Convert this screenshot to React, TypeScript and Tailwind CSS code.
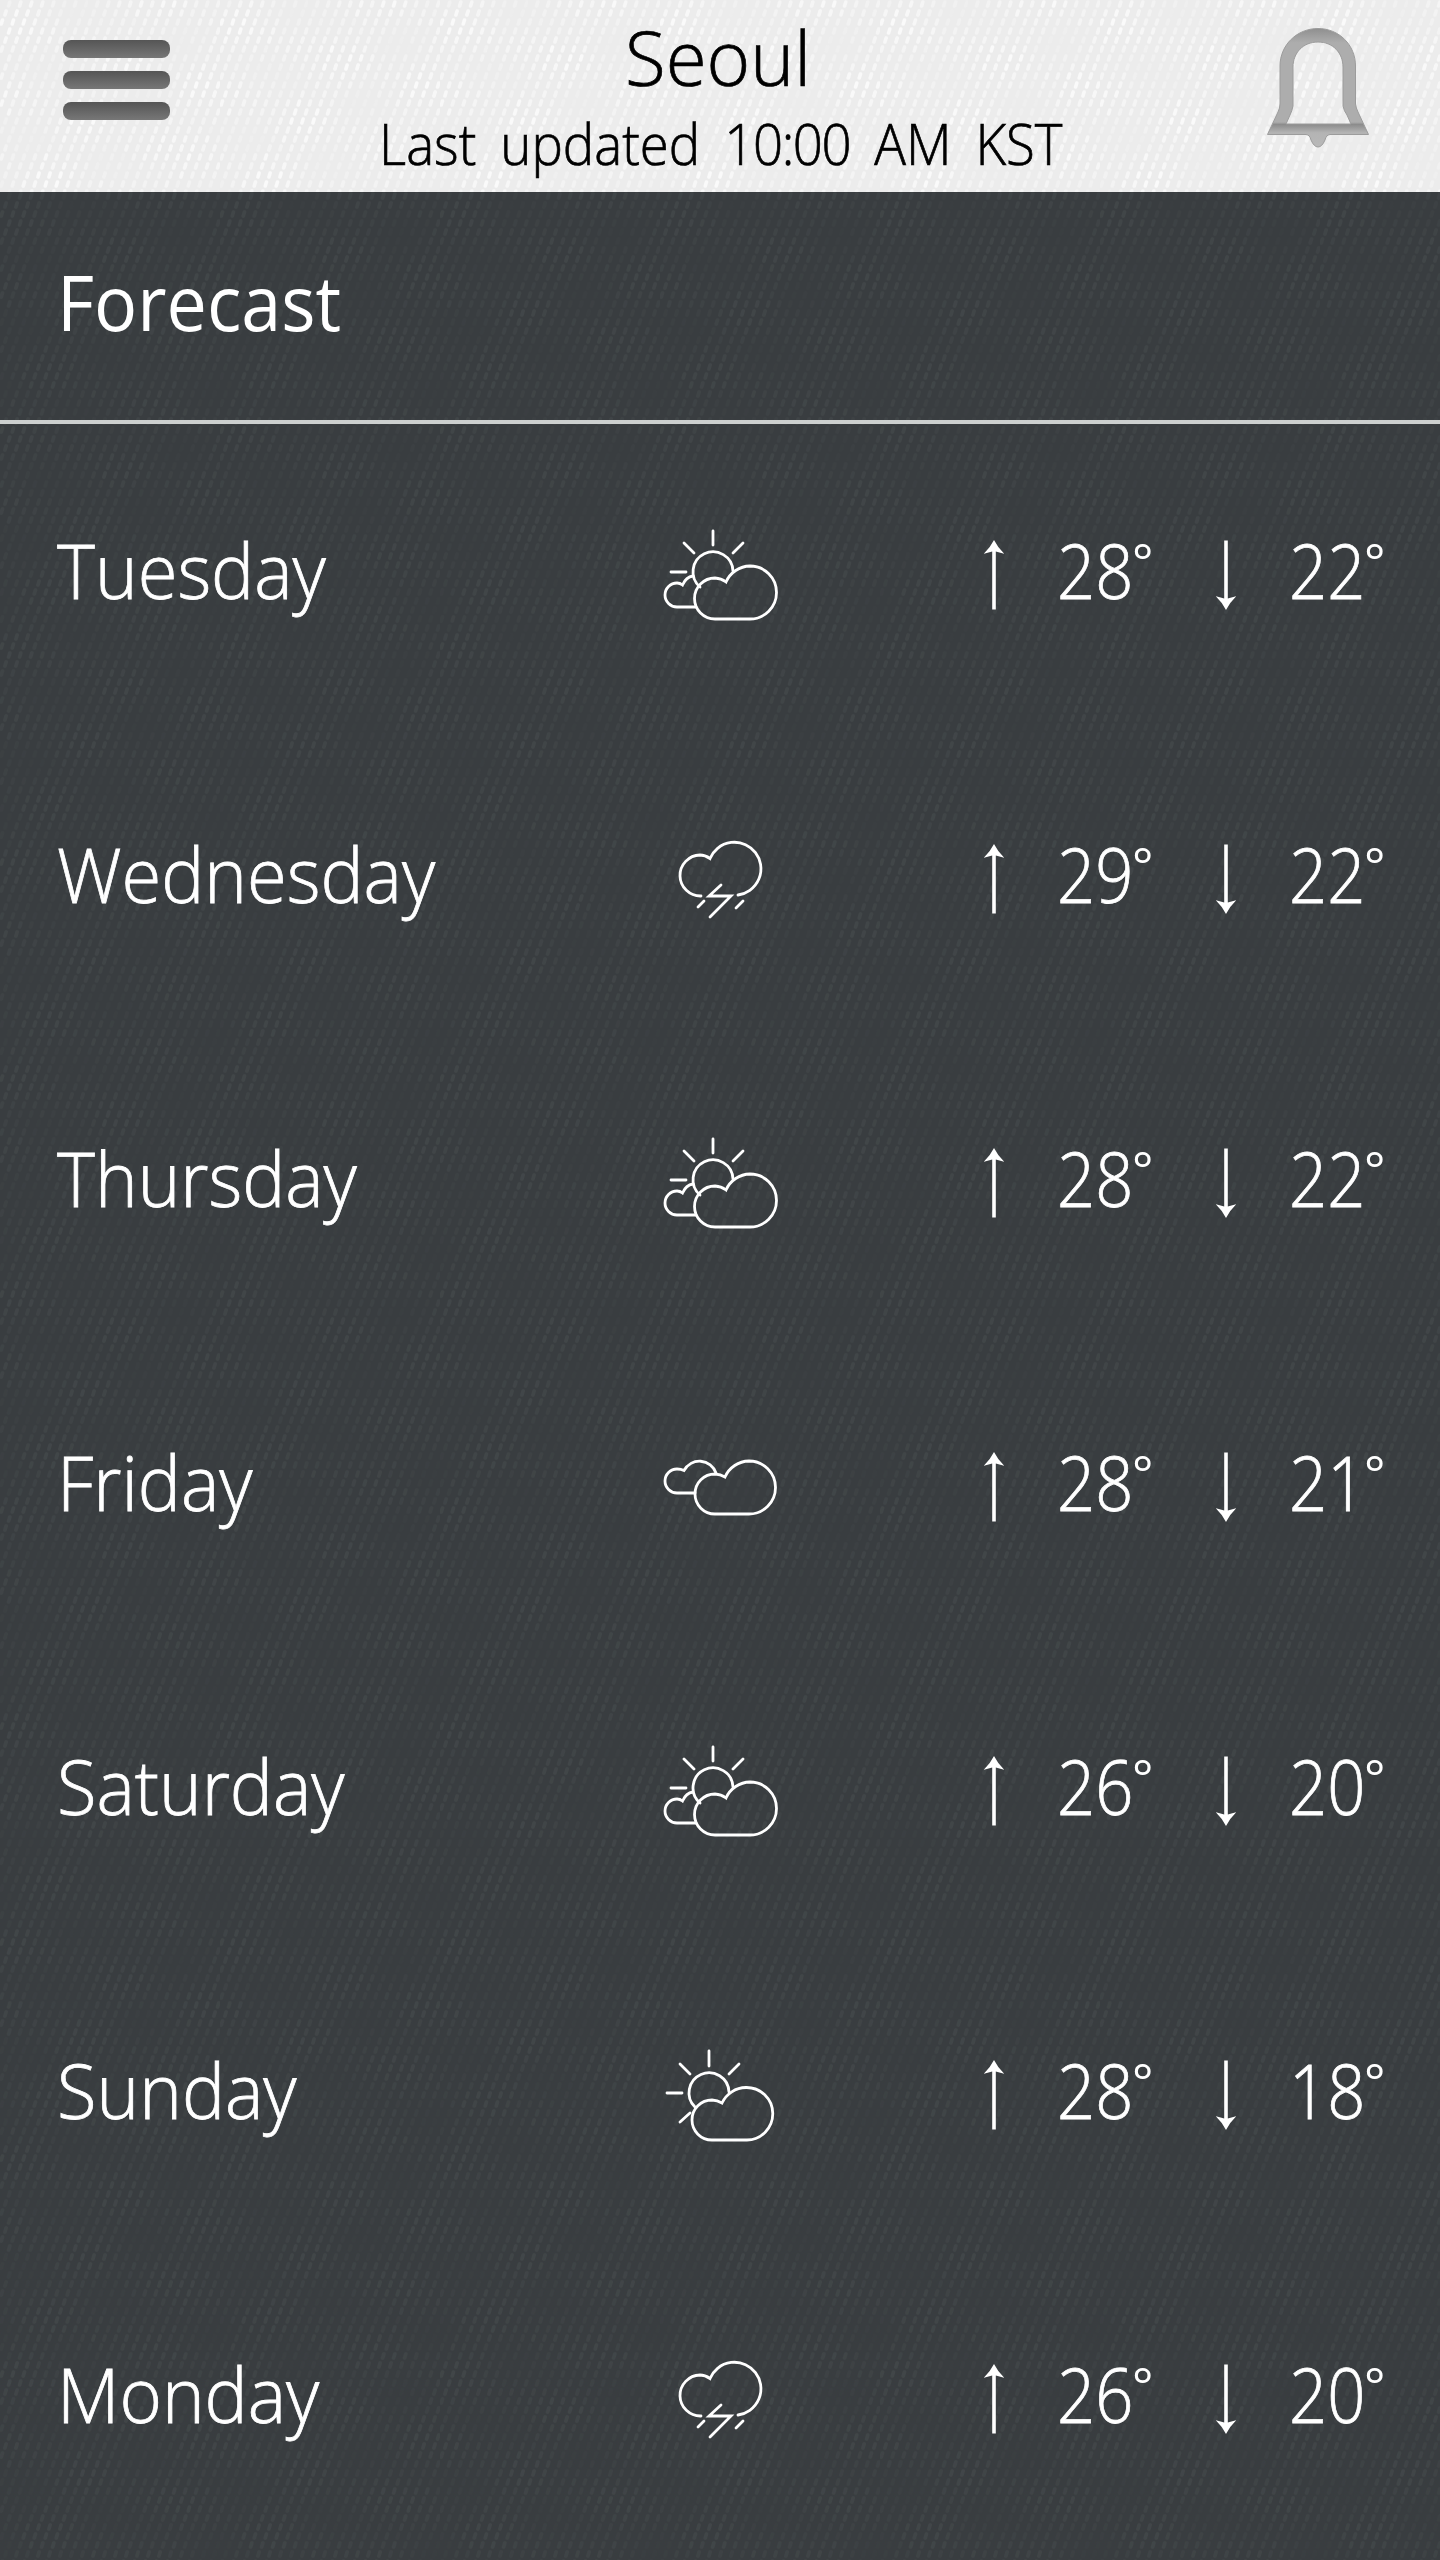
type Weather = "sunClouds" | "storm" | "clouds" | "sunCloud";

const forecast: { day: string; weather: Weather; high: number; low: number }[] = [
  { day: "Tuesday", weather: "sunClouds", high: 28, low: 22 },
  { day: "Wednesday", weather: "storm", high: 29, low: 22 },
  { day: "Thursday", weather: "sunClouds", high: 28, low: 22 },
  { day: "Friday", weather: "clouds", high: 28, low: 21 },
  { day: "Saturday", weather: "sunClouds", high: 26, low: 20 },
  { day: "Sunday", weather: "sunCloud", high: 28, low: 18 },
  { day: "Monday", weather: "storm", high: 26, low: 20 },
];

const weatherPaths: Record<Weather, string[]> = {
  sunClouds: [
    "M73 21V35M44 33L54 43M103 33L93 43M31 62H46",
    "M60 77A20 20 0 1 1 93 61",
    "M56 97H37A12 12 0 0 1 37 73Q40 73 42.500 75Q46 67 53 66",
    "M75 109A20.500 20.500 0 0 1 75 68A20.500 20.500 0 0 1 86 72A27 27 0 0 1 110 56A26.500 26.500 0 0 1 110 109Z",
  ],
  storm: [
    "M61 82A20.500 20.500 0 0 1 60 41Q65 41 70 44.500A26.500 26.500 0 1 1 98 81",
    "M81 71L69 82H91L70 103M64 87L58 93M103 87L96 94",
  ],
  clouds: [
    "M55 71H37A12 12 0 0 1 37 47Q41 47 44 48.500A17.500 17.500 0 0 1 76 51",
    "M75 92A20 20 0 0 1 75 52A20 20 0 0 1 85 55A27 27 0 0 1 109 39A26.500 26.500 0 0 1 109 92Z",
  ],
  sunCloud: [
    "M69 21V36M40 34L50 44M99 34L89 44M27 63H42M40 92L50 83",
    "M55 77A20 20 0 1 1 89 62",
    "M72 110A20 20 0 0 1 72 70A20 20 0 0 1 82 73A27 27 0 0 1 106 57.500A26 26 0 0 1 107 110Z",
  ],
};

// Short slanted threads on a staggered grid, fading in and out so the weave looks uneven
const threads = Array.from({ length: 24 * 20 }, (_, i) => {
  const row = Math.floor(i / 20);
  const col = i % 20;
  const u = (col / 20) * Math.PI * 2;
  const v = (row / 24) * Math.PI * 2;
  const wave = Math.sin(u * 2 + v) + Math.sin(v * 3 - u) + Math.sin(u * 3 + v * 2);
  const jitter = ((i * 7919) % 13) / 13;
  return {
    x: col * 11 + 9 - (row % 3) * 3.67,
    y: row * 9 + 1,
    opacity: Math.max(0, Math.min(1, 0.4 + wave * 0.2 + jitter * 0.4)),
  };
});

function Fabric({ id, color }: { id: string; color: string }) {
  return (
    <svg className="absolute inset-0 h-full w-full" aria-hidden="true">
      <pattern id={id} width="220" height="216" patternUnits="userSpaceOnUse">
        {threads.map((t) => (
          <path key={`${t.x}-${t.y}`} d={`M${t.x + 0.8} ${t.y + 1}l-1.200 4`} stroke={color} strokeWidth="3.600" strokeLinecap="round" opacity={t.opacity} />
        ))}
      </pattern>
      <rect width="100%" height="100%" fill={`url(#${id})`} />
    </svg>
  );
}

function WeatherIcon({ name }: { name: Weather }) {
  return (
    <svg className="mt-2.5 h-[130px] w-[160px] shrink-0" viewBox="0 0 160 130" fill="none" stroke="#fff" strokeWidth="2.800" strokeLinecap="round">
      {weatherPaths[name].map((d) => (
        <path key={d} d={d} />
      ))}
    </svg>
  );
}

function Arrow({ down }: { down?: boolean }) {
  return (
    <svg className={down ? "mt-2.5 h-[70px] w-5 shrink-0 rotate-180" : "mt-2.5 h-[70px] w-5 shrink-0"} viewBox="0 0 20 70" fill="#fff">
      <path d="M10 0Q14 8 20.500 14L11.800 11.500V69.500H8.200V11.500L-.5 14Q6 8 10 0Z" />
    </svg>
  );
}

function Bell() {
  return (
    <svg className="mr-[71px] mt-7 h-[120px] w-[102px]" viewBox="0 0 102 120">
      <linearGradient id="bell" x1="0" y1="0" x2="0" y2="1">
        <stop offset="0" stopColor="#8f8f8f" />
        <stop offset=".12" stopColor="#adadad" />
        <stop offset=".79" stopColor="#adadad" />
        <stop offset=".81" stopColor="#8c8c8c" />
        <stop offset=".88" stopColor="#b4b4b4" />
        <stop offset="1" stopColor="#b8b8b8" />
      </linearGradient>
      <path
        d="M51 .5C72 .5 88.500 17 88.500 38V76Q89 80 91 84L101.500 106.500H63Q59 107 58 112Q55 119 51 119Q47 119 44 112Q43 107 39 106.500H.5L11 84Q13 80 13 76V38C13 17 30 .5 51 .5ZM51 14C36 14 26 25 26 39V78Q25 83 23 87L19 96H84L80 87Q77 83 76 78V39C76 25 66 14 51 14Z"
        fill="url(#bell)"
        fillRule="evenodd"
        stroke="#9c9c9c"
        strokeWidth="1"
      />
    </svg>
  );
}

function Temperature({ value }: { value: number }) {
  return (
    <div className="ml-[53px] flex w-[159px] shrink-0 items-start">
      <span className="w-[75px] origin-left scale-x-[.88] text-[76px] leading-none [-webkit-text-stroke:0.8px]">{value}</span>
      <span className="text-[50px] font-normal leading-[58px]">°</span>
    </div>
  );
}

export default function App() {
  return (
    <div className="h-[2560px] w-[1440px] overflow-hidden bg-[#393d40] font-['Open_Sans',sans-serif] font-light text-white">
      <header className="relative h-48 bg-[#ececec] text-black">
        <Fabric id="fabric-light" color="#fafafa" />
        <div className="relative flex items-start justify-between">
          <div className="ml-[63px] mt-10 flex w-[107px] flex-col gap-[13px]">
            <div className="h-[18px] rounded-lg bg-linear-to-b from-[#555] to-[#777]" />
            <div className="h-[18px] rounded-lg bg-linear-to-b from-[#555] to-[#777]" />
            <div className="h-[18px] rounded-lg bg-linear-to-b from-[#555] to-[#777]" />
          </div>
          <div className="text-center [-webkit-text-stroke:0.7px]">
            <h1 className="mt-[17px] scale-x-[.98] text-[76px] leading-[80px]">Seoul</h1>
            <p className="scale-x-[.926] pl-1.5 text-[57px] leading-[92px] [word-spacing:11px]">
              Last updated <span className="tracking-[-1.5px]">10:00</span> AM KST
            </p>
          </div>
          <Bell />
        </div>
      </header>
      <main className="relative h-[2368px]">
        <Fabric id="fabric-dark" color="#414648" />
        <div className="relative">
          <section className="flex h-[232px] items-center border-b-4 border-[#cdd0cf] pb-2 pl-[57px]">
            <h2 className="origin-left scale-x-[.945] text-[76px] font-normal leading-none">Forecast</h2>
          </section>
          <ul>
            {forecast.map((row) => (
              <li key={row.day} className="flex h-[304px] items-center pb-3 pl-[57px]">
                <div className="w-[583px] shrink-0">
                  <span className="block origin-left scale-x-[.952] text-[76px] leading-none [-webkit-text-stroke:0.8px]">{row.day}</span>
                </div>
                <WeatherIcon name={row.weather} />
                <div className="ml-[184px] flex shrink-0 items-center">
                  <Arrow />
                  <Temperature value={row.high} />
                  <Arrow down />
                  <Temperature value={row.low} />
                </div>
              </li>
            ))}
          </ul>
        </div>
      </main>
    </div>
  );
}
